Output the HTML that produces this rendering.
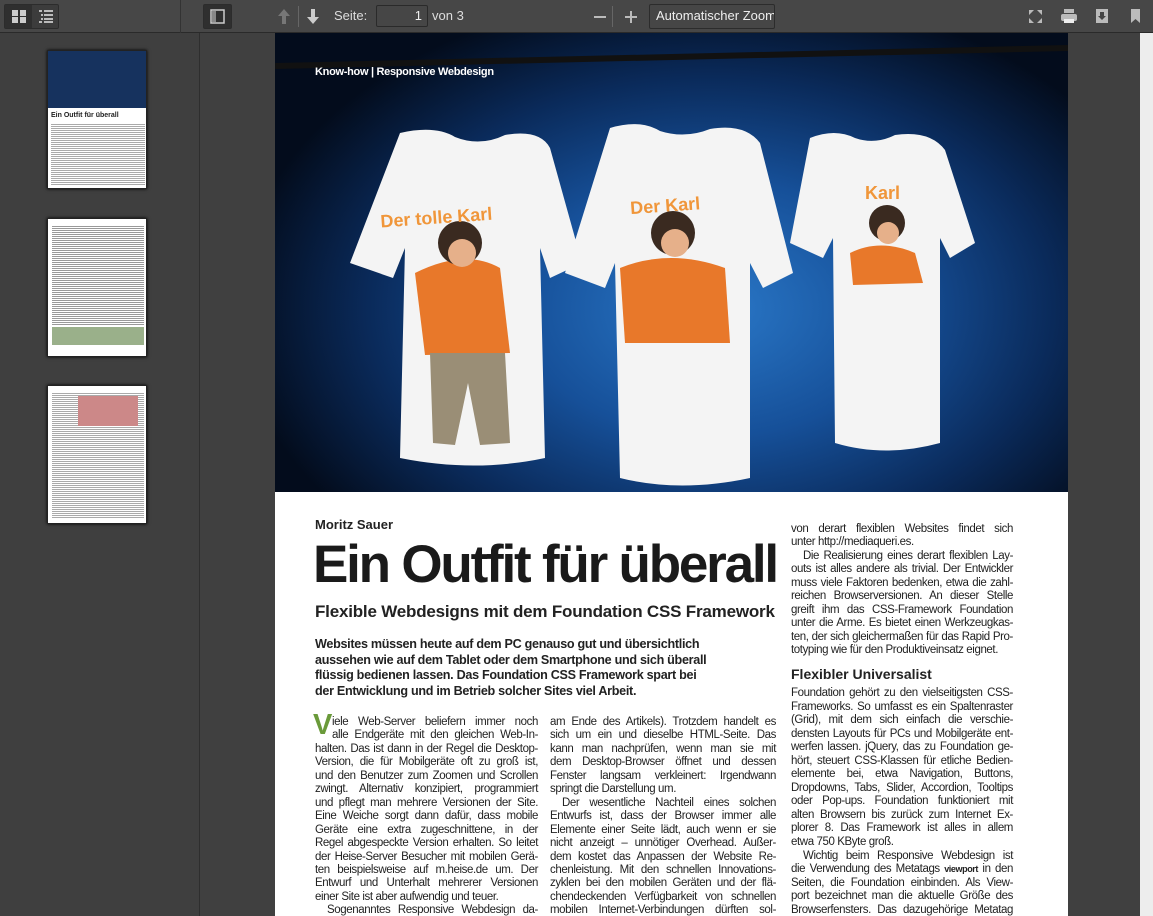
<!DOCTYPE html>
<html><head><meta charset="utf-8"><style>
*{margin:0;padding:0;box-sizing:border-box}
html,body{width:1153px;height:916px;overflow:hidden}
body{background:#404040;font-family:"Liberation Sans",sans-serif;position:relative}
#side{position:absolute;left:0;top:0;width:200px;height:916px;background:#3f3f3f;border-right:1px solid #2e2e2e}
#tb{position:absolute;left:0;top:0;width:1153px;height:33px;background:#474747;border-bottom:1px solid #2a2a2a}
.btn{position:absolute;background:#3a3a3a;border:1px solid #2c2c2c;border-radius:2px}
.thumb{position:absolute;left:47px;width:100px;height:139px;background:#fff;border:1px solid #222;box-shadow:0 0 3px #000}
#main{position:absolute;left:201px;top:33px;width:952px;height:883px;background:#404040}
#page{position:absolute;left:275px;top:33px;width:793px;height:883px;background:#fff;overflow:hidden}
#img{position:absolute;left:0;top:0;width:793px;height:459px;background:radial-gradient(ellipse 60% 70% at 55% 60%,#2a78c8 0%,#165099 40%,#0a2a5a 72%,#030c1c 100%)}
.col{position:absolute;font-size:11.5px;line-height:13.45px;color:#222;letter-spacing:-0.4px}
.col div{text-align:justify;text-align-last:justify;white-space:nowrap}
.col div.l{text-align-last:left}
.scroll{position:absolute;left:1140px;top:33px;width:13px;height:883px;background:#ededed}
</style></head><body>
<div id="side"></div>
<div id="main"></div>
<div id="tb">
 <div class="btn" style="left:4px;top:4px;width:55px;height:25px;background:#3c3c3c"></div>
 <div style="position:absolute;left:5px;top:5px;width:27px;height:23px;background:#2f2f2f"></div>
 <svg style="position:absolute;left:11px;top:9px" width="16" height="15"><rect x="1" y="1" width="6" height="6" fill="#ccc"/><rect x="9" y="1" width="6" height="6" fill="#ccc"/><rect x="1" y="8" width="6" height="6" fill="#ccc"/><rect x="9" y="8" width="6" height="6" fill="#ccc"/></svg>
 <svg style="position:absolute;left:38px;top:9px" width="16" height="15" fill="#bbb"><rect x="1" y="1" width="3" height="2"/><rect x="6" y="1" width="9" height="2"/><rect x="3" y="5" width="2" height="2"/><rect x="6" y="5" width="9" height="2"/><rect x="3" y="9" width="2" height="2"/><rect x="6" y="9" width="9" height="2"/><rect x="1" y="12" width="3" height="2"/><rect x="6" y="12" width="9" height="2"/></svg>
 <div style="position:absolute;left:180px;top:0;width:1px;height:33px;background:#333"></div>
 <div class="btn" style="left:203px;top:4px;width:29px;height:25px;background:#2f2f2f"></div>
 <svg style="position:absolute;left:210px;top:9px" width="15" height="15"><rect x="1" y="1" width="13" height="13" fill="none" stroke="#ccc" stroke-width="1.5"/><rect x="2" y="2" width="4" height="11" fill="#888"/></svg>
 <svg style="position:absolute;left:276px;top:8px" width="16" height="17" fill="#777"><path d="M8 1L2 8h4v8h4V8h4z"/></svg>
 <div style="position:absolute;left:298px;top:6px;width:1px;height:21px;background:#666"></div>
 <svg style="position:absolute;left:305px;top:8px" width="16" height="17" fill="#ccc"><path d="M6 1h4v8h4l-6 7-6-7h4z"/></svg>
 <div style="position:absolute;left:334px;top:8px;font-size:13px;color:#ddd">Seite:</div>
 <div class="btn" style="left:376px;top:5px;width:52px;height:22px;background:#464646;border-color:#2a2a2a"></div>
 <div style="position:absolute;left:376px;top:8px;width:46px;text-align:right;font-size:13px;color:#eee">1</div>
 <div style="position:absolute;left:432px;top:8px;font-size:13px;color:#ddd">von 3</div>
 <div style="position:absolute;left:594px;top:16px;width:12px;height:2px;background:#bbb"></div>
 <div style="position:absolute;left:612px;top:6px;width:1px;height:21px;background:#666"></div>
 <div style="position:absolute;left:625px;top:16px;width:12px;height:2px;background:#bbb"></div>
 <div style="position:absolute;left:630px;top:11px;width:2px;height:12px;background:#bbb"></div>
 <div class="btn" style="left:649px;top:4px;width:126px;height:25px;background:#464646"></div>
 <div style="position:absolute;left:656px;top:8px;font-size:13px;color:#eee;white-space:nowrap;width:118px;overflow:hidden">Automatischer Zoom</div>
 <svg style="position:absolute;left:1028px;top:9px" width="15" height="15" fill="#bbb"><path d="M1 1h5L1 6zM14 1v5L9 1zM1 14V9l5 5zM14 14H9l5-5z"/></svg>
 <svg style="position:absolute;left:1060px;top:8px" width="18" height="16" fill="#bbb"><rect x="4" y="1" width="10" height="4"/><rect x="1" y="6" width="16" height="7" rx="2"/><rect x="4" y="11" width="10" height="4" fill="#eee"/></svg>
 <svg style="position:absolute;left:1095px;top:8px" width="14" height="16"><rect x="1" y="1" width="12" height="14" fill="#bbb"/><path d="M5 4h4v4h2l-4 4-4-4h2z" fill="#444"/></svg>
 <svg style="position:absolute;left:1130px;top:8px" width="11" height="16" fill="#bbb"><path d="M1 1h9v14L5.5 11 1 15z"/></svg>
</div>
<div class="thumb" style="top:50px;background:linear-gradient(#16325e 0,#16325e 57px,#fff 57px)">
 <div style="position:absolute;left:3px;top:61px;font-size:7px;font-weight:bold;color:#222;white-space:nowrap">Ein Outfit für überall</div>
 <div style="position:absolute;left:3px;top:72px;width:94px;height:62px;background:repeating-linear-gradient(#fff 0,#fff 1px,#aaa 1px,#aaa 2px)"></div>
</div>
<div class="thumb" style="top:218px"><div style="position:absolute;left:4px;top:6px;width:92px;height:100px;background:repeating-linear-gradient(#fff 0,#fff 1px,#999 1px,#999 2px)"></div><div style="position:absolute;left:4px;top:108px;width:92px;height:18px;background:#9ab08a"></div></div>
<div class="thumb" style="top:385px"><div style="position:absolute;left:4px;top:6px;width:92px;height:126px;background:repeating-linear-gradient(#fff 0,#fff 1px,#aaa 1px,#aaa 2px)"></div><div style="position:absolute;left:30px;top:10px;width:60px;height:30px;background:#c88"></div></div>
<div class="scroll"></div>
<div id="page">
 <div id="img">
  <div style="position:absolute;left:0;top:12px;width:793px;height:6px;background:#111;transform:rotate(-1.3deg);transform-origin:right"></div>
  <div style="position:absolute;left:40px;top:33px;font-size:11px;font-weight:bold;color:#fff;letter-spacing:-0.3px">Know-how | Responsive Webdesign</div>
  <svg width="793" height="459" style="position:absolute;left:0;top:0">
   <g fill="#f4f4f4"><path d="M125 100 Q160 92 180 104 Q205 114 230 102 Q265 96 275 115 L307 230 L275 245 L265 215 L270 425 Q200 440 125 425 L130 215 L118 245 L75 230 Z"/>
   <path d="M335 95 Q365 86 385 98 Q410 106 435 96 Q470 90 485 110 L518 240 L488 255 L475 230 L475 445 Q405 460 345 445 L340 230 L330 255 L290 240 Z"/>
   <path d="M535 105 Q560 95 580 105 Q600 112 620 102 Q655 97 670 117 L700 210 L675 225 L665 205 L665 410 Q610 425 560 410 L558 205 L548 225 L515 210 Z"/></g>
   <g fill="#e8782a"><path d="M140 240 Q190 215 225 235 L235 320 L150 322Z"/><path d="M345 235 Q395 215 450 235 L455 310 L350 310Z"/><path d="M575 220 Q605 205 640 220 L648 250 L578 252Z"/></g>
   <path d="M155 320 L230 320 L235 410 L205 412 L193 350 L180 412 L158 410Z" fill="#9a8e76"/>
   <g fill="#3a2a20"><circle cx="185" cy="210" r="22"/><circle cx="398" cy="200" r="22"/><circle cx="612" cy="190" r="18"/></g>
   <g fill="#e6b08a"><circle cx="187" cy="220" r="14"/><circle cx="400" cy="210" r="14"/><circle cx="613" cy="200" r="11"/></g>
   <g font-family="Liberation Sans,sans-serif" font-weight="bold" fill="#f0963a"><text x="105" y="190" font-size="18" transform="rotate(-4 170 180)">Der tolle Karl</text><text x="355" y="178" font-size="18" transform="rotate(-4 400 170)">Der Karl</text><text x="590" y="166" font-size="18">Karl</text></g>
  </svg>
 </div>
 <div style="position:absolute;left:40px;top:484px;font-size:13px;font-weight:bold;color:#222">Moritz Sauer</div>
 <div style="position:absolute;left:38px;top:502px;font-size:53px;font-weight:bold;color:#1a1a1a;letter-spacing:-2.2px;white-space:nowrap;line-height:60px">Ein Outfit für überall</div>
 <div style="position:absolute;left:40px;top:569px;font-size:17px;font-weight:bold;color:#222;letter-spacing:-0.2px;white-space:nowrap">Flexible Webdesigns mit dem Foundation CSS Framework</div>
 <div style="position:absolute;left:40px;top:604px;font-size:12.6px;font-weight:bold;color:#222;line-height:15.5px;letter-spacing:-0.3px;white-space:nowrap">Websites müssen heute auf dem PC genauso gut und übersichtlich<br>aussehen wie auf dem Tablet oder dem Smartphone und sich überall<br>flüssig bedienen lassen. Das Foundation CSS Framework spart bei<br>der Entwicklung und im Betrieb solcher Sites viel Arbeit.</div>
 <div style="position:absolute;left:38px;top:677px;font-size:29px;font-weight:bold;color:#6a9a3a;line-height:30px">V</div>
 <div class="col" style="left:40px;top:683px;width:223px">
  <div style="padding-left:17px">iele Web-Server beliefern immer noch</div>
  <div style="padding-left:17px">alle Endgeräte mit den gleichen Web-In-</div>
  <div>halten. Das ist dann in der Regel die Desktop-</div>
  <div>Version, die für Mobilgeräte oft zu groß ist,</div>
  <div>und den Benutzer zum Zoomen und Scrollen</div>
  <div>zwingt. Alternativ konzipiert, programmiert</div>
  <div>und pflegt man mehrere Versionen der Site.</div>
  <div>Eine Weiche sorgt dann dafür, dass mobile</div>
  <div>Geräte eine extra zugeschnittene, in der</div>
  <div>Regel abgespeckte Version erhalten. So leitet</div>
  <div>der Heise-Server Besucher mit mobilen Gerä-</div>
  <div>ten beispielsweise auf m.heise.de um. Der</div>
  <div>Entwurf und Unterhalt mehrerer Versionen</div>
  <div class="l">einer Site ist aber aufwendig und teuer.</div>
  <div style="padding-left:12px">Sogenanntes Responsive Webdesign da-</div>
 </div>
 <div class="col" style="left:275px;top:683px;width:226px">
  <div>am Ende des Artikels). Trotzdem handelt es</div>
  <div>sich um ein und dieselbe HTML-Seite. Das</div>
  <div>kann man nachprüfen, wenn man sie mit</div>
  <div>dem Desktop-Browser öffnet und dessen</div>
  <div>Fenster langsam verkleinert: Irgendwann</div>
  <div class="l">springt die Darstellung um.</div>
  <div style="padding-left:12px">Der wesentliche Nachteil eines solchen</div>
  <div>Entwurfs ist, dass der Browser immer alle</div>
  <div>Elemente einer Seite lädt, auch wenn er sie</div>
  <div>nicht anzeigt – unnötiger Overhead. Außer-</div>
  <div>dem kostet das Anpassen der Website Re-</div>
  <div>chenleistung. Mit den schnellen Innovations-</div>
  <div>zyklen bei den mobilen Geräten und der flä-</div>
  <div>chendeckenden Verfügbarkeit von schnellen</div>
  <div>mobilen Internet-Verbindungen dürften sol-</div>
 </div>
 <div class="col" style="left:516px;top:490px;width:222px">
  <div>von derart flexiblen Websites findet sich</div>
  <div class="l">unter http://mediaqueri.es.</div>
  <div style="padding-left:12px">Die Realisierung eines derart flexiblen Lay-</div>
  <div>outs ist alles andere als trivial. Der Entwickler</div>
  <div>muss viele Faktoren bedenken, etwa die zahl-</div>
  <div>reichen Browserversionen. An dieser Stelle</div>
  <div>greift ihm das CSS-Framework Foundation</div>
  <div>unter die Arme. Es bietet einen Werkzeugkas-</div>
  <div>ten, der sich gleichermaßen für das Rapid Pro-</div>
  <div class="l">totyping wie für den Produktiveinsatz eignet.</div>
 </div>
 <div style="position:absolute;left:516px;top:633px;font-size:14px;font-weight:bold;color:#222">Flexibler Universalist</div>
 <div class="col" style="left:516px;top:654px;width:222px;line-height:13.55px">
  <div>Foundation gehört zu den vielseitigsten CSS-</div>
  <div>Frameworks. So umfasst es ein Spaltenraster</div>
  <div>(Grid), mit dem sich einfach die verschie-</div>
  <div>densten Layouts für PCs und Mobilgeräte ent-</div>
  <div>werfen lassen. jQuery, das zu Foundation ge-</div>
  <div>hört, steuert CSS-Klassen für etliche Bedien-</div>
  <div>elemente bei, etwa Navigation, Buttons,</div>
  <div>Dropdowns, Tabs, Slider, Accordion, Tooltips</div>
  <div>oder Pop-ups. Foundation funktioniert mit</div>
  <div>alten Browsern bis zurück zum Internet Ex-</div>
  <div>plorer 8. Das Framework ist alles in allem</div>
  <div class="l">etwa 750 KByte groß.</div>
  <div style="padding-left:12px">Wichtig beim Responsive Webdesign ist</div>
  <div>die Verwendung des Metatags <span style="font-size:9px;font-weight:bold">viewport</span> in den</div>
  <div>Seiten, die Foundation einbinden. Als View-</div>
  <div>port bezeichnet man die aktuelle Größe des</div>
  <div>Browserfensters. Das dazugehörige Metatag</div>
 </div>
</div>
</body></html>
